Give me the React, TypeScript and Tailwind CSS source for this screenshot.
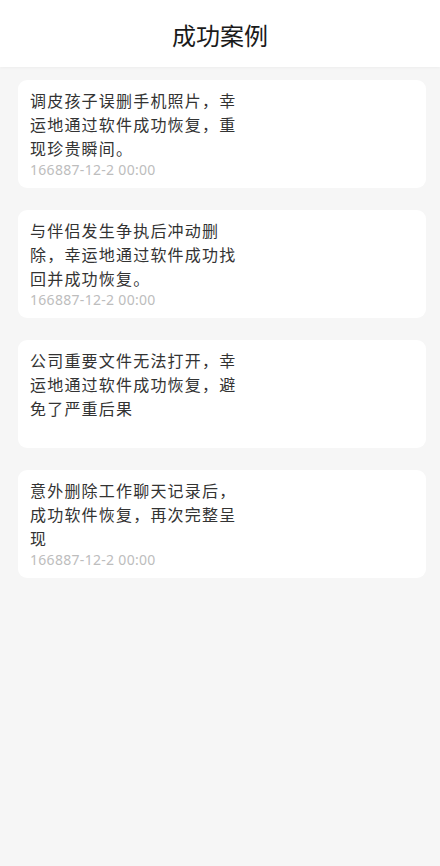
const cases = [
  { text: '调皮孩子误删手机照片，幸运地通过软件成功恢复，重现珍贵瞬间。', date: '166887-12-2 00:00' },
  { text: '与伴侣发生争执后冲动删除，幸运地通过软件成功找回并成功恢复。', date: '166887-12-2 00:00' },
  { text: '公司重要文件无法打开，幸运地通过软件成功恢复，避免了严重后果', date: '' },
  { text: '意外删除工作聊天记录后，成功软件恢复，再次完整呈现', date: '166887-12-2 00:00' },
]

export default function App() {
  return (
    <div
      className="w-[440px] h-[866px] bg-[#f6f6f6] flex flex-col"
      style={{ fontFamily: "'Noto Sans CJK SC', 'Noto Sans', sans-serif" }}
    >
      <header className="h-[67px] shrink-0 bg-white flex items-center justify-center shadow-[0_1px_3px_rgba(0,0,0,0.04)]">
        <h1 className="text-[24px] leading-none text-[#1a1a1a] pt-[2px]">成功案例</h1>
      </header>

      <div className="flex flex-col gap-[22px] pt-[13px] pl-[18px] pr-[14px]">
        {cases.map((c, i) => (
          <div key={i} className="h-[108px] bg-white rounded-[9px] pl-[12px] pt-[8px]">
            <p className="w-[216px] text-[16px] leading-[24px] tracking-[1.2px] text-[#333]">{c.text}</p>
            {c.date ? (
              <p
                className="mt-[1px] text-[14px] leading-[18px] text-[#bdbdbd] tracking-[0.3px]"
                style={{ fontFamily: "'Noto Sans', sans-serif" }}
              >
                {c.date}
              </p>
            ) : null}
          </div>
        ))}
      </div>
    </div>
  )
}
